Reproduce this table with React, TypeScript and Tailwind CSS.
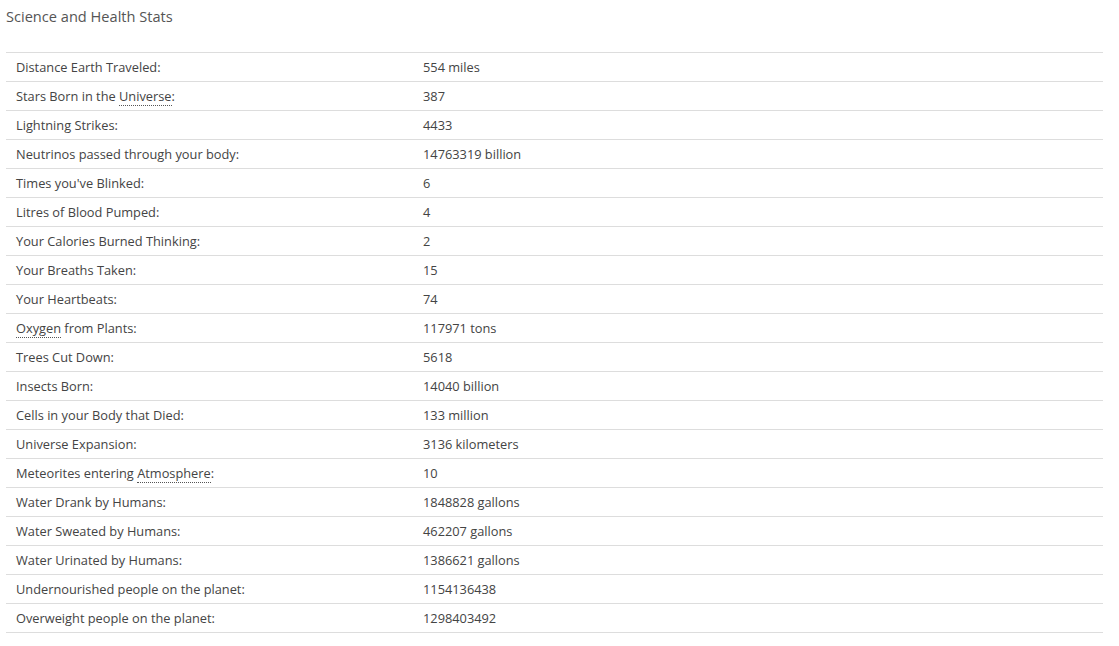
const ROWS: [React.ReactNode, string][] = [
  ["Distance Earth Traveled:", "554 miles"],
  [<>Stars Born in the <Abbr>Universe</Abbr>:</>, "387"],
  ["Lightning Strikes:", "4433"],
  ["Neutrinos passed through your body:", "14763319 billion"],
  ["Times you've Blinked:", "6"],
  ["Litres of Blood Pumped:", "4"],
  ["Your Calories Burned Thinking:", "2"],
  ["Your Breaths Taken:", "15"],
  ["Your Heartbeats:", "74"],
  [<><Abbr>Oxygen</Abbr> from Plants:</>, "117971 tons"],
  ["Trees Cut Down:", "5618"],
  ["Insects Born:", "14040 billion"],
  ["Cells in your Body that Died:", "133 million"],
  ["Universe Expansion:", "3136 kilometers"],
  [<>Meteorites entering <Abbr>Atmosphere</Abbr>:</>, "10"],
  ["Water Drank by Humans:", "1848828 gallons"],
  ["Water Sweated by Humans:", "462207 gallons"],
  ["Water Urinated by Humans:", "1386621 gallons"],
  ["Undernourished people on the planet:", "1154136438"],
  ["Overweight people on the planet:", "1298403492"],
];

function Abbr({ children }: { children: React.ReactNode }) {
  return (
    <span className="border-b border-dotted border-[#555] cursor-help">
      {children}
    </span>
  );
}

export default function App() {
  return (
    <div className="min-h-screen bg-white font-['Open_Sans',sans-serif] text-[#444]">
      <div className="pl-[6px] w-[1103px]">
        <h2 className="pt-[5px] text-[14.6px] leading-[22px] text-[#555] font-normal">
          Science and Health Stats
        </h2>

        {/* stats table */}
        <div className="mt-[25px] border-b border-[#ddd]">
          {ROWS.map(([label, value], id) => (
            <div
              key={id}
              className="flex items-center h-[29px] border-t border-[#ddd] text-[12.8px] leading-[18px]"
            >
              <div className="w-[417px] pl-[10px]">{label}</div>
              <div className="flex-1">{value}</div>
            </div>
          ))}
        </div>
      </div>
    </div>
  );
}
